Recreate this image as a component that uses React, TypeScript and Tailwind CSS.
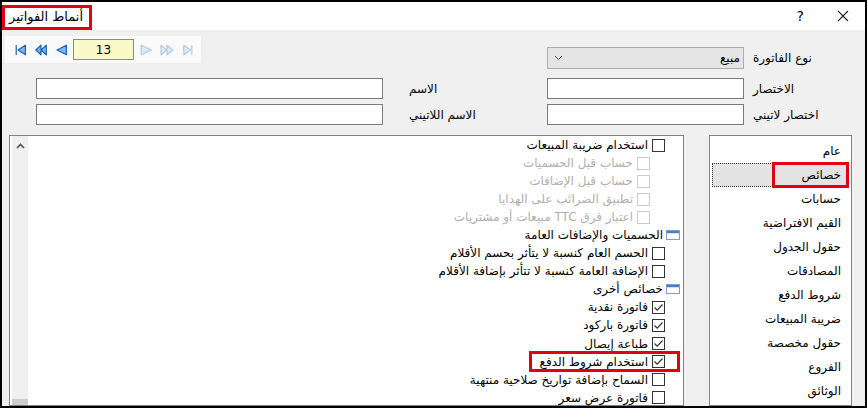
import React from 'react';

const font = { fontFamily: '"DejaVu Sans", sans-serif' };

type Node = { label: string; level: 0 | 1; kind: 'check' | 'group'; checked?: boolean; disabled?: boolean; mark?: boolean };

const tree: Node[] = [
  { label: 'استخدام ضريبة المبيعات', level: 0, kind: 'check' },
  { label: 'حساب قبل الحسميات', level: 1, kind: 'check', disabled: true },
  { label: 'حساب قبل الإضافات', level: 1, kind: 'check', disabled: true },
  { label: 'تطبيق الضرائب على الهدايا', level: 1, kind: 'check', disabled: true },
  { label: 'اعتبار فرق TTC مبيعات أو مشتريات', level: 1, kind: 'check', disabled: true },
  { label: 'الحسميات والإضافات العامة', level: 0, kind: 'group' },
  { label: 'الحسم العام كنسبة لا يتأثر بحسم الأقلام', level: 0, kind: 'check' },
  { label: 'الإضافة العامة كنسبة لا تتأثر بإضافة الأقلام', level: 0, kind: 'check' },
  { label: 'خصائص أخرى', level: 0, kind: 'group' },
  { label: 'فاتورة نقدية', level: 0, kind: 'check', checked: true },
  { label: 'فاتورة باركود', level: 0, kind: 'check', checked: true },
  { label: 'طباعة إيصال', level: 0, kind: 'check', checked: true },
  { label: 'استخدام شروط الدفع', level: 0, kind: 'check', checked: true, mark: true },
  { label: 'السماح بإضافة تواريخ صلاحية منتهية', level: 0, kind: 'check' },
  { label: 'فاتورة عرض سعر', level: 0, kind: 'check' },
];

const sections = [
  'عام',
  'خصائص',
  'حسابات',
  'القيم الافتراضية',
  'حقول الجدول',
  'المصادقات',
  'شروط الدفع',
  'ضريبة المبيعات',
  'حقول مخصصة',
  'الفروع',
  'الوثائق',
];

function CheckBox({ checked, disabled }: { checked?: boolean; disabled?: boolean }) {
  return (
    <span
      className={`flex h-[13px] w-[13px] shrink-0 items-center justify-center border bg-white ${
        disabled ? 'border-[#cccccc]' : 'border-[#333333]'
      }`}
    >
      {checked && (
        <svg width="11" height="11" viewBox="0 0 11 11">
          <path d="M1.5 5.5 L4.2 8.2 L9.5 2.5" fill="none" stroke="#333" strokeWidth="1.2" />
        </svg>
      )}
    </span>
  );
}

function GroupIcon() {
  return (
    <svg width="14" height="10" viewBox="0 0 14 10" className="shrink-0">
      <rect x="0.5" y="0.5" width="13" height="9" fill="#fff" stroke="#7f9dc6" />
      <rect x="1" y="1" width="12" height="2" fill="#3f7fd1" />
      <rect x="1" y="3" width="12" height="1" fill="#cfe0f6" />
    </svg>
  );
}

function NavIcon({ d, w, enabled, className }: { d: string; w: number; enabled: boolean; className?: string }) {
  return (
    <svg width={w} height="12" viewBox={`0 0 ${w} 12`} className={className}>
      <path
        d={d}
        fill={enabled ? '#7db6ea' : '#dfeaf5'}
        stroke={enabled ? '#1565b8' : '#b3cadf'}
        strokeWidth="1.2"
        strokeLinejoin="round"
      />
    </svg>
  );
}

export default function App() {
  return (
    <div className="flex h-[408px] w-[867px] flex-col overflow-hidden border-2 border-black bg-[#f0f0f0] text-[12px] text-black" style={font}>
      {/* title bar */}
      <div className="flex h-[28px] shrink-0 items-center bg-white">
        <div className="mt-[2px] flex h-[25px] items-center border-[3px] border-[#e0000f] pl-[4px] pr-[6px] text-[13px]">أنماط الفواتير</div>
        <div className="ml-auto mr-[33px] text-[14px]">?</div>
        <svg width="12" height="12" viewBox="0 0 12 12" className="mr-[16px]">
          <path d="M1 1 L11 11 M11 1 L1 11" stroke="#222" strokeWidth="1.1" />
        </svg>
      </div>

      {/* header fields */}
      <div className="flex shrink-0">
        <div className="flex flex-col">
          <div className="ml-[3px] mt-[6px] flex h-[27px] w-[196px] items-center bg-[#fafafa] pl-[10px]">
            <NavIcon enabled w={11} d="M1.2 1 V11 M10.4 1.2 L3 6 L10.4 10.8 Z" />
            <NavIcon enabled w={12} className="ml-[9px]" d="M6 1.2 L0.8 6 L6 10.8 Z M11.3 1.2 L6 6 L11.3 10.8 Z" />
            <NavIcon enabled w={11} className="ml-[9px]" d="M10.4 1.2 L1 6 L10.4 10.8 Z" />
            <div className="ml-[6px] flex h-[21px] w-[61px] items-center justify-center border border-[#8a8a8a] bg-[#fafac8] text-[12px]">13</div>
            <NavIcon enabled={false} w={13} className="ml-[6px]" d="M1.2 1.2 L11.5 6 L1.2 10.8 Z" />
            <NavIcon enabled={false} w={14} className="ml-[7px]" d="M1 1.2 L6.6 6 L1 10.8 Z M7 1.2 L12.8 6 L7 10.8 Z" />
            <NavIcon enabled={false} w={10} className="ml-[9px]" d="M8.8 1 V11 M0.8 1.2 L7.6 6 L0.8 10.8 Z" />
          </div>
          <div className="ml-[34px] mt-[15px] flex h-[21px] items-center">
            <div className="h-[21px] w-[347px] border border-[#7a7a7a] bg-white" />
            <span className="ml-[26px]">الاسم</span>
          </div>
          <div className="ml-[34px] mt-[5px] flex h-[21px] items-center">
            <div className="h-[21px] w-[347px] border border-[#7a7a7a] bg-white" />
            <span className="ml-[26px]">الاسم اللاتيني</span>
          </div>
        </div>
        <div className="ml-auto mr-[30px] flex flex-col">
          <div className="mt-[17px] flex h-[22px] items-center">
            <div className="flex h-[22px] w-[197px] items-center border border-[#adadad] bg-[#e5e5e5] pl-[6px] pr-[3px]">
              <svg width="9" height="6" viewBox="0 0 9 6">
                <path d="M1 1 L4.5 4.5 L8 1" fill="none" stroke="#555" strokeWidth="1" />
              </svg>
              <span className="ml-auto">مبيع</span>
            </div>
            <span className="ml-[9px] w-[82px]">نوع الفاتورة</span>
          </div>
          <div className="mt-[9px] flex h-[21px] items-center">
            <div className="h-[21px] w-[197px] border border-[#7a7a7a] bg-white" />
            <span className="ml-[9px] w-[82px]">الاختصار</span>
          </div>
          <div className="mt-[5px] flex h-[21px] items-center">
            <div className="h-[21px] w-[197px] border border-[#7a7a7a] bg-white" />
            <span className="ml-[9px] w-[82px]">اختصار لاتيني</span>
          </div>
        </div>
      </div>

      {/* panels */}
      <div className="mt-[10px] flex min-h-0 flex-1 pl-[7px] pr-[13px]">
        <div className="flex w-[675px] border border-[#828282] bg-white">
          <div className="ml-[2px] flex w-[16px] flex-col items-center bg-[#f0f0f0]">
            <svg width="9" height="6" viewBox="0 0 9 6" className="mt-[7px]">
              <path d="M1 5 L4.5 1.5 L8 5" fill="none" stroke="#555" strokeWidth="1.6" />
            </svg>
            <div className="mt-auto h-[6px] w-[16px] bg-[#cdcdcd]" />
          </div>
          <div dir="rtl" className="flex-1">
            {tree.map((n) => (
              <div
                key={n.label}
                className={`flex h-[18.05px] items-center ${
                  n.kind === 'group' ? 'mr-[3px] gap-[3px]' : n.level === 1 ? 'mr-[33px] gap-[4px]' : 'mr-[18px] gap-[4px]'
                }`}
              >
                {n.mark ? (
                  <div className="-mr-[15px] flex h-[21px] items-center gap-[4px] border-[3px] border-[#e0000f] pl-[8px] pr-[12px]">
                    <CheckBox checked={n.checked} />
                    <span>{n.label}</span>
                  </div>
                ) : (
                  <>
                    {n.kind === 'group' ? <GroupIcon /> : <CheckBox checked={n.checked} disabled={n.disabled} />}
                    <span className={n.disabled ? 'text-[#b0b0b0]' : ''}>{n.label}</span>
                  </>
                )}
              </div>
            ))}
          </div>
        </div>
        <div dir="rtl" className="ml-auto w-[143px] border border-[#828282] bg-white pt-[3px]">
          {sections.map((s, i) =>
            i === 1 ? (
              <div key={s} className="ml-[2px] mr-[2px] flex h-[24px] items-center border border-dotted border-[#333] bg-[#e3e3e3]">
                <span className="-mr-[1px] flex h-[26px] items-center border-[3px] border-[#e0000f] pl-[26px] pr-[5px]">{s}</span>
              </div>
            ) : (
              <div key={s} className="flex h-[24px] items-center pr-[10px]">
                {s}
              </div>
            )
          )}
        </div>
      </div>
    </div>
  );
}
